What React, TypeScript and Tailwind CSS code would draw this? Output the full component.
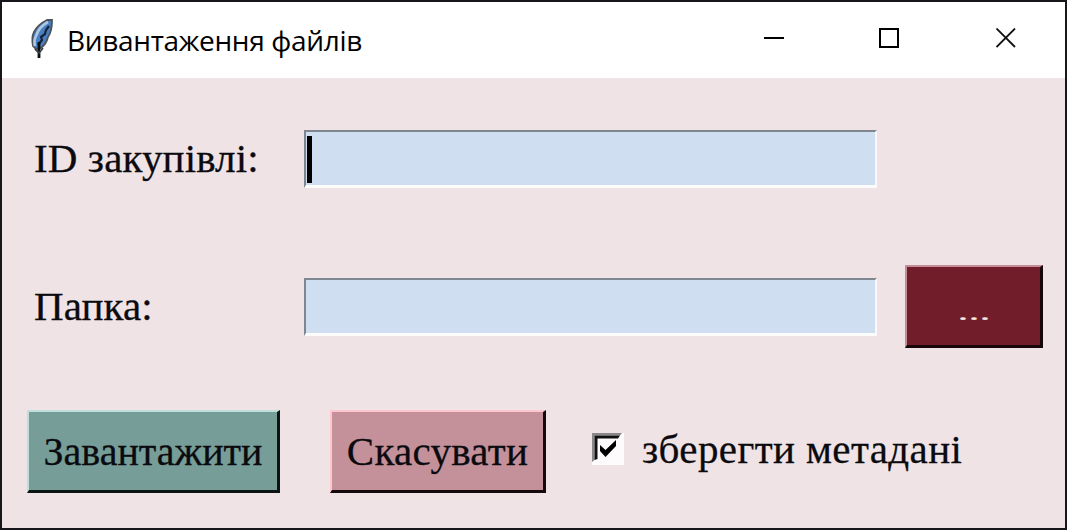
import { useState } from "react";

function Feather() {
  return (
    <svg width="26" height="42" viewBox="0 0 26 42" fill="none">
      <path d="M25 2 L20 2 C14 5 10 8 7 14 C5 18 5 23 6 28 L9 31 L14 30 C18 27 20 23 21 19 C24 15 25 8 25 2Z" fill="#4a80c2" stroke="#4d5358" strokeWidth="1.800" />
      <path d="M21 4 C15 7 11 12 9 18 C7 22 7 25 8 28" stroke="#adc8e4" strokeWidth="2.600" />
      <path d="M22 8 L19 12 L18 16 L14 19 L15 22 L11 27" stroke="#152438" strokeWidth="2.200" />
      <path d="M12 24 V40" stroke="#0b0d10" strokeWidth="2.800" />
      <path d="M8 31 L12 35 L16 30" stroke="#3b4045" strokeWidth="1.800" />
    </svg>
  );
}

function TitleBar() {
  return (
    <header className="flex h-[76px] shrink-0 items-start bg-white">
      <div className="ml-[25px] mt-[16px] w-[26px]">
        <Feather />
      </div>
      <h1 className="ml-[14px] mt-[18px] w-[650px] whitespace-nowrap font-['Open_Sans','Noto_Sans',sans-serif] text-[28px] leading-[40px] tracking-[-0.32px] text-black">
        Вивантаження файлів
      </h1>
      <div className="ml-[45px] mt-[26px] flex gap-[95px]">
        <svg width="22" height="22" viewBox="0 0 22 22" stroke="#000" strokeWidth="2">
          <path d="M2 10H22" />
        </svg>
        <svg width="22" height="22" viewBox="0 0 22 22" fill="none" stroke="#000" strokeWidth="2">
          <path d="M1 1H19V19H1Z" />
        </svg>
        <svg width="22" height="22" viewBox="0 0 22 22" stroke="#111" strokeWidth="1.800">
          <path d="M0.500 0.500L19 19M19 0.500L0.500 19" />
        </svg>
      </div>
    </header>
  );
}

function Field({ focused = false, label }: { focused?: boolean; label: string }) {
  return (
    <div className="relative h-[58px] w-[573px]">
      <input
        aria-label={label}
        className="block h-full w-full rounded-none border-t-2 border-r-2 border-b-3 border-l-2 border-t-[#80868f] border-r-[#fbf7fa] border-b-[#fdfcfd] border-l-[#80868f] bg-[#cfdff1] px-2 caret-transparent outline-none"
      />
      {focused && <span className="absolute top-[6px] left-[3px] h-[47px] w-[5px] bg-black" />}
    </div>
  );
}

export default function App() {
  const [checked, setChecked] = useState(true);
  return (
    <div className="flex h-[530px] w-[1067px] flex-col overflow-hidden border-2 border-[#17161a] bg-[#f0e3e5] font-['Liberation_Serif',serif] text-[41px] text-[#0b0b0f] [-webkit-text-stroke:0.3px]">
      <div className="[-webkit-text-stroke:0px]">
        <TitleBar />
      </div>
      <main className="flex flex-col pl-[25px]">
        <div className="mt-[52px] flex h-[58px] items-center">
          <label className="w-[277px] pl-[7px] tracking-[0.12px] whitespace-nowrap">ID закупівлі:</label>
          <Field label="ID закупівлі" focused />
        </div>
        <div className="mt-[77px] flex h-[83px] items-center">
          <label className="w-[277px] pl-[7px] tracking-[0.1px] whitespace-nowrap">Папка:</label>
          <Field label="Папка" />
          <button className="ml-[28px] flex h-[83px] w-[138px] items-center justify-center border-t-2 border-r-3 border-b-3 border-l-2 border-t-[#c58c95] border-r-[#17070b] border-b-[#17070b] border-l-[#c58c95] bg-[#711d2a] text-[40px] text-[#f5e6df]">
            <span className="mb-[8px] origin-bottom scale-x-110 scale-y-60 pb-[14px]">...</span>
          </button>
        </div>
        <div className="mt-[62px] flex h-[83px] items-center">
          <button className="h-[83px] w-[253px] border-t-2 border-r-3 border-b-3 border-l-2 border-t-[#bfe0d8] border-r-[#0c1413] border-b-[#0c1413] border-l-[#bfe0d8] bg-[#769d98] pt-[2px] text-[40px] whitespace-nowrap">
            Завантажити
          </button>
          <button className="ml-[50px] h-[83px] w-[216px] border-t-2 border-r-3 border-b-3 border-l-2 border-t-[#ffc6cf] border-r-[#14090c] border-b-[#14090c] border-l-[#ffc6cf] bg-[#c4919a] pt-[2px] tracking-[0.3px] whitespace-nowrap">
            Скасувати
          </button>
          <button
            role="checkbox"
            aria-checked={checked}
            aria-label="зберегти метадані"
            onClick={() => setChecked(!checked)}
            className="mb-[5px] ml-[46px] h-[32px] w-[32px]"
          >
            <svg width="32" height="32" viewBox="0 0 32 32">
              <path d="M0 0H32V32H0Z" fill="#fdfbfc" />
              <path d="M0 29V0H30L28 2.500H2.500V27Z" fill="#8b8688" />
              <path d="M2.500 27V2.500H28L26 5.500H5.500V26Z" fill="#101010" />
              {checked && <path d="M8 12L13.500 17L24 7V13L13.500 24L8 18Z" fill="#000" />}
            </svg>
          </button>
          <span className="mb-[4px] ml-[18px] tracking-[0.4px] whitespace-nowrap">зберегти метадані</span>
        </div>
      </main>
    </div>
  );
}
